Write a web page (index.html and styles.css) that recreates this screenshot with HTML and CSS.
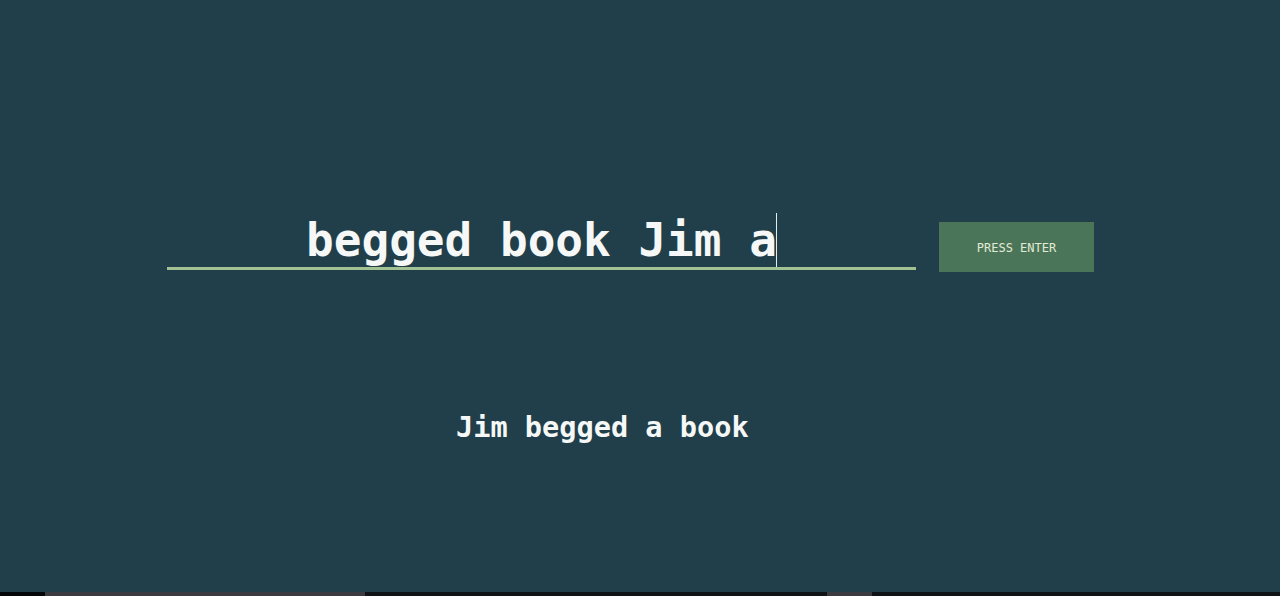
FILE: index.html
```html
<!DOCTYPE html>
<html lang="en">
<head>
<meta charset="utf-8">
<title>Word order</title>
<link rel="stylesheet" href="styles.css">
</head>
<body>
<main class="page">
  <div class="row">
    <div class="field">
      <span class="typed">begged book Jim a</span><span class="caret"></span>
    </div>
    <button class="enter">PRESS ENTER</button>
  </div>
  <p class="answer">Jim begged a book</p>
</main>
<div class="strip">
  <span class="seg seg-black" style="width:45px"></span>
  <span class="seg seg-gray" style="width:320px"></span>
  <span class="seg seg-dark" style="width:462px"></span>
  <span class="seg seg-gray" style="width:45px"></span>
  <span class="seg seg-dark" style="width:408px"></span>
</div>
</body>
</html>
```
FILE: styles.css
```css
* { box-sizing: border-box; }
html, body { margin: 0; padding: 0; }
body {
  width: 1280px;
  height: 596px;
  overflow: hidden;
  background: #213f4a;
  font-family: "DejaVu Sans Mono", "Liberation Mono", monospace;
}
.page {
  height: 592px;
  padding-top: 206px;
}
.row {
  display: flex;
  align-items: flex-start;
  gap: 23px;
  padding-left: 167px;
}
.field {
  width: 749px;
  height: 64px;
  padding-top: 8px;
  border-bottom: 3px solid #a3c293;
  display: flex;
  justify-content: center;
  align-items: flex-start;
}
.typed {
  font-size: 46px;
  line-height: 52px;
  font-weight: bold;
  color: #f5f8f6;
  white-space: pre;
}
.caret {
  width: 1px;
  height: 54px;
  margin-top: -1px;
  margin-left: -1px;
  background: #e6ecea;
}
.enter {
  margin-top: 16px;
  width: 155px;
  height: 50px;
  border: 0;
  border-radius: 0;
  background: #4a7558;
  color: #e2ebd6;
  font-family: "DejaVu Sans Mono", "Liberation Mono", monospace;
  font-size: 12px;
  padding: 2px 0 0;
}
.answer {
  margin: 137px 0 0;
  padding-left: 456px;
  font-size: 28.6px;
  line-height: 36px;
  font-weight: bold;
  color: #f5f8f6;
  white-space: pre;
}
.strip {
  height: 4px;
  display: flex;
  background: #0b0e11;
}
.seg { display: block; height: 4px; }
.seg-black { background: #050608; }
.seg-gray { background: #3b3b41; }
.seg-dark { background: #111417; }
```
